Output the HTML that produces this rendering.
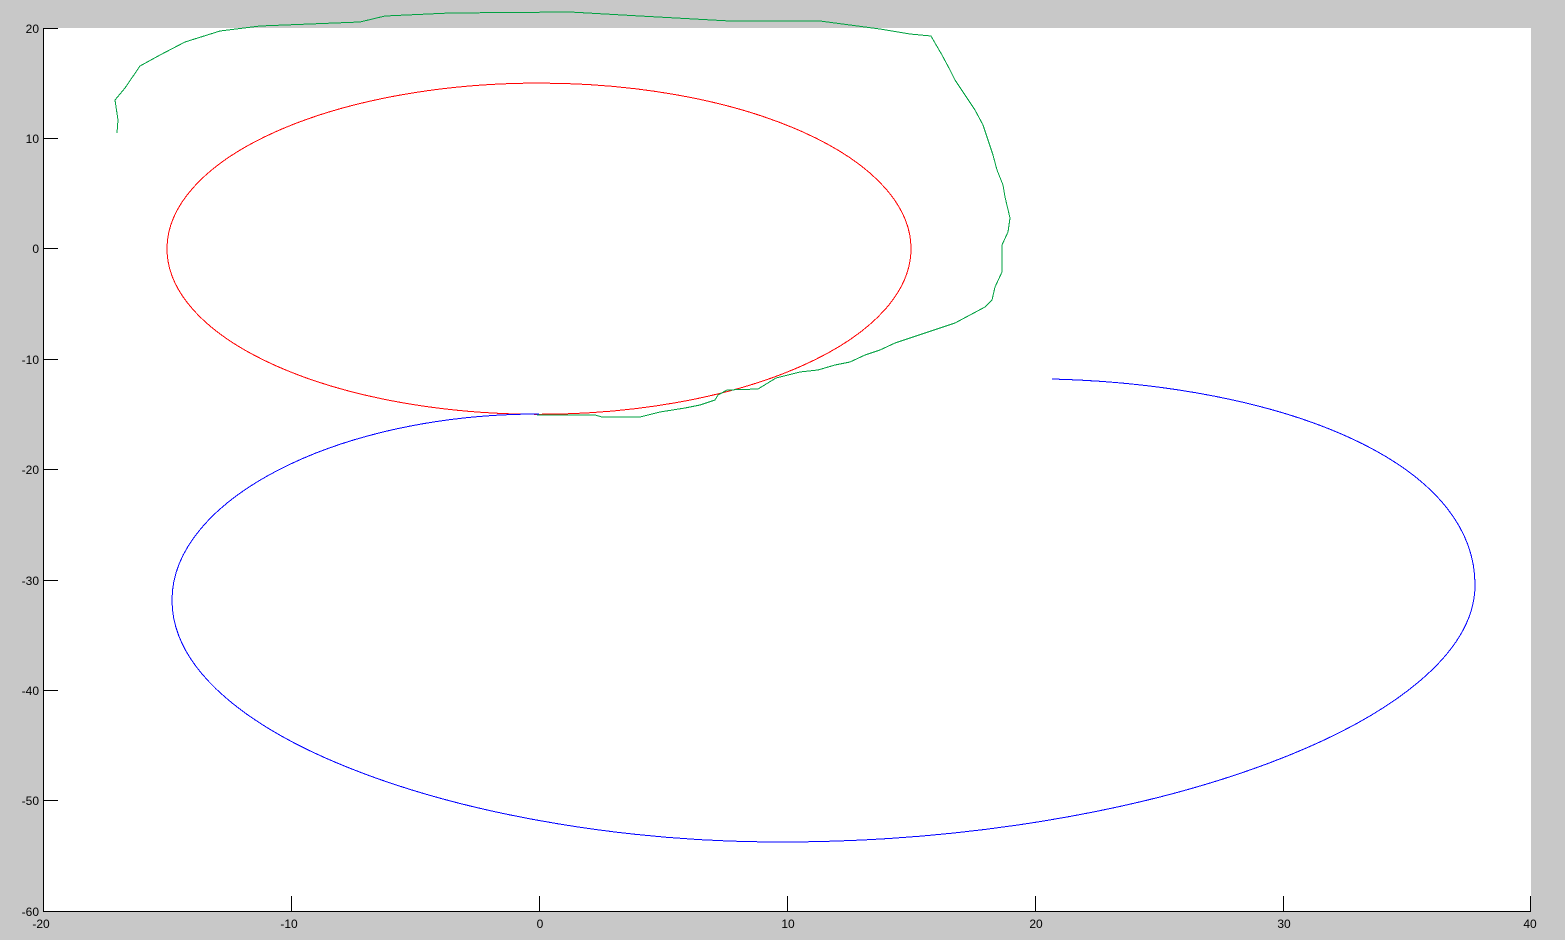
<!DOCTYPE html>
<html><head><meta charset="utf-8"><style>
html,body{margin:0;padding:0;background:#c8c8c8;}
svg{display:block;}
text{font-family:"Liberation Sans",sans-serif;font-size:12px;fill:#000;}
</style></head><body>
<svg width="1565" height="940" viewBox="0 0 1565 940" xmlns="http://www.w3.org/2000/svg">
<rect x="0" y="0" width="1565" height="940" fill="#c8c8c8"/>
<rect x="43" y="28" width="1488" height="883" fill="#fff"/>
<g stroke="#000" stroke-width="1" shape-rendering="crispEdges">
<line x1="43.5" y1="28" x2="43.5" y2="912"/>
<line x1="43" y1="911.5" x2="1531" y2="911.5"/>
<line x1="43" y1="28.5" x2="58" y2="28.5"/>
<line x1="291.5" y1="911" x2="291.5" y2="896"/>
<line x1="539.5" y1="911" x2="539.5" y2="896"/>
<line x1="787.5" y1="911" x2="787.5" y2="896"/>
<line x1="1035.5" y1="911" x2="1035.5" y2="896"/>
<line x1="1283.5" y1="911" x2="1283.5" y2="896"/>
<line x1="1530.5" y1="911" x2="1530.5" y2="896"/>
<line x1="43" y1="138.5" x2="58" y2="138.5"/>
<line x1="43" y1="248.5" x2="58" y2="248.5"/>
<line x1="43" y1="359.5" x2="58" y2="359.5"/>
<line x1="43" y1="469.5" x2="58" y2="469.5"/>
<line x1="43" y1="580.5" x2="58" y2="580.5"/>
<line x1="43" y1="690.5" x2="58" y2="690.5"/>
<line x1="43" y1="800.5" x2="58" y2="800.5"/>
</g>
<g text-anchor="end">
<text x="39" y="33">20</text><text x="39" y="143">10</text><text x="39" y="253">0</text>
<text x="39" y="364">-10</text><text x="39" y="474">-20</text><text x="39" y="585">-30</text>
<text x="39" y="695">-40</text><text x="39" y="805">-50</text><text x="39" y="916">-60</text>
</g>
<g text-anchor="middle">
<text x="41" y="928">-20</text><text x="289" y="928">-10</text><text x="540" y="928">0</text>
<text x="788" y="928">10</text><text x="1036" y="928">20</text><text x="1284" y="928">30</text><text x="1530" y="928">40</text>
</g>
<g shape-rendering="crispEdges" fill="none" stroke-width="1">
<ellipse cx="539" cy="248.7" rx="372" ry="165.6" stroke="#ff0000"/>
<path d="M539,414 C336,414 172,500 172,600 C172,740 480,842 780,842 C1150,842 1475,720 1475,585 C1475,460 1280,385 1052,379" stroke="#0000ff"/>
<polyline stroke="#00a040" points="117,133 118,120 115,100 125,88 140,66 160,55 185,42 220,31 260,26 360,22 385,16 450,13 570,12 640,16 730,21 820,21 850,25 880,29 910,34 931,36 935,43 942,55 950,70 955,80 965,95 975,110 983,125 988,140 993,155 997,170 1003,185 1005,197 1010,218 1008,232 1002,245 1002,272 995,287 992,300 985,307 970,315 955,323 940,328 925,333 910,338 895,343 880,350 865,355 850,362 835,365 818,370 800,372 776,378 758,389 727,390 718,395 715,400 700,405 685,408 660,412 640,417 602,417 595,415 537,415"/>
</g>
</svg>
</body></html>
